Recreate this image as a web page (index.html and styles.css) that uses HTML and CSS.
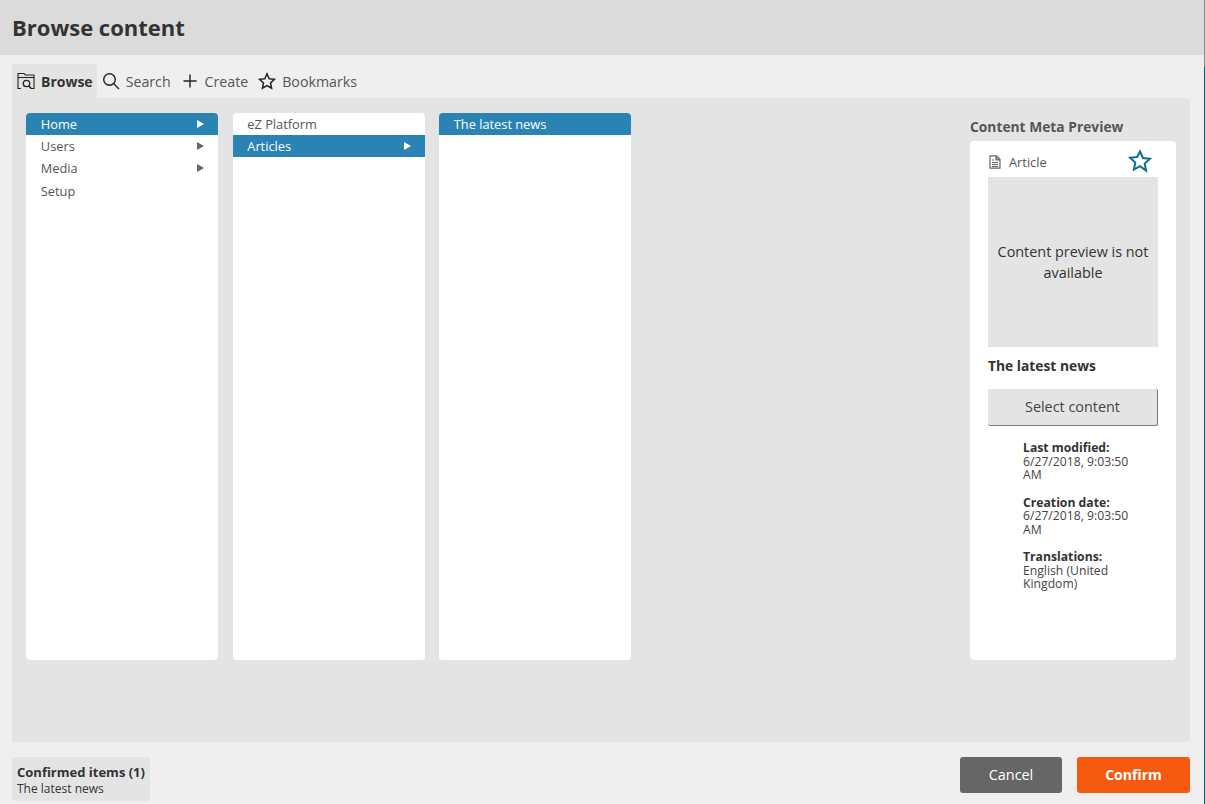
FILE: index.html
```html
<!DOCTYPE html>
<html lang="en">
<head>
<meta charset="utf-8">
<title>Browse content</title>
<link rel="stylesheet" href="styles.css">
</head>
<body>
<div class="modal">
  <header class="title-bar"><h1 class="title">Browse content</h1></header>
  <nav class="tabs">
    <div class="tab tab-active">
      <svg class="tab-icon" viewBox="0 0 18 18" width="18" height="18" fill="none" stroke="#222" stroke-width="1.100"><path d="M4 16.500H1V1.500h6l1.500 1.500h8.500v13.500h-3"/><path d="M1 5.500h16"/><circle cx="9.500" cy="11.500" r="3.200" stroke-width="1.300"/><path d="M11.800 13.800l2.200 2.700" stroke-width="1.600"/></svg>
      <span>Browse</span>
    </div>
    <div class="tab">
      <svg class="tab-icon" viewBox="0 0 18 18" width="18" height="18" fill="none" stroke="#222" stroke-width="1.400"><circle cx="7.500" cy="7.500" r="5.800"/><path d="M11.800 11.800l5.200 5.200"/></svg>
      <span>Search</span>
    </div>
    <div class="tab">
      <svg class="tab-icon" viewBox="0 0 18 18" width="18" height="18" fill="none" stroke="#222" stroke-width="1.400"><path d="M9 2.500v13M2.500 9h13"/></svg>
      <span>Create</span>
    </div>
    <div class="tab">
      <svg class="tab-icon" viewBox="0 0 18 18" width="18" height="18" fill="none" stroke="#222" stroke-width="1.500"><path d="M9 1.800l2.200 4.900 5.300.6-4 3.600 1.100 5.300L9 13.500l-4.600 2.700 1.100-5.300-4-3.600 5.300-.6z"/></svg>
      <span>Bookmarks</span>
    </div>
  </nav>
  <main class="panel">
    <div class="columns">
      <ul class="column">
        <li class="item item-selected item-arrow">Home</li>
        <li class="item item-arrow">Users</li>
        <li class="item item-arrow">Media</li>
        <li class="item">Setup</li>
      </ul>
      <ul class="column">
        <li class="item">eZ Platform</li>
        <li class="item item-selected item-arrow">Articles</li>
      </ul>
      <ul class="column">
        <li class="item item-selected">The latest news</li>
      </ul>
    </div>
    <aside class="preview">
      <h2 class="preview-heading">Content Meta Preview</h2>
      <div class="preview-card">
        <div class="preview-type">
          <svg class="type-icon" viewBox="0 0 12 14" width="12" height="14" fill="none" stroke="#666" stroke-width="1.200"><path d="M1 .8h6.500l3.500 3.500v8.900H1z"/><path d="M7 .8v4h4" fill="#999"/><path d="M3 5h2M3 7.500h6M3 9.500h6M3 11.500h6"/></svg>
          <span class="type-name">Article</span>
          <svg class="star" viewBox="0 0 24 24" width="24" height="24" fill="none" stroke="#0e6f95" stroke-width="2"><path d="M12 2.500l2.900 6.500 7 .8-5.200 4.800 1.400 7L12 17.100l-6.100 3.500 1.400-7-5.200-4.800 7-.8z"/></svg>
        </div>
        <div class="no-preview">Content preview is not available</div>
        <h3 class="content-name">The latest news</h3>
        <button class="select-btn" type="button">Select content</button>
        <dl class="meta">
          <dt>Last modified:</dt><dd>6/27/2018, 9:03:50 AM</dd>
          <dt>Creation date:</dt><dd>6/27/2018, 9:03:50 AM</dd>
          <dt>Translations:</dt><dd>English (United Kingdom)</dd>
        </dl>
      </div>
    </aside>
  </main>
  <footer class="footer">
    <div class="confirmed">
      <div class="confirmed-title">Confirmed items (1)</div>
      <div class="confirmed-item">The latest news</div>
    </div>
    <div class="actions">
      <button class="btn btn-cancel" type="button">Cancel</button>
      <button class="btn btn-confirm" type="button">Confirm</button>
    </div>
  </footer>
</div>
</body>
</html>
```
FILE: styles.css
```css
* { box-sizing: border-box; }
html, body { margin: 0; height: 100%; }
body {
  font-family: "Open Sans", "Noto Sans", sans-serif;
  font-size: 13px;
  color: #333;
  overflow: hidden;
  background: linear-gradient(#8a8a8a 0 67px, #0b5a70 67px);
}
.modal {
  width: 1204px;
  height: 804px;
  background: #efefef;
  display: flex;
  flex-direction: column;
}
.title-bar {
  height: 55px;
  flex: none;
  background: #dbdbdb;
  padding: 0 12px 2px;
  display: flex;
  align-items: center;
}
.title { margin: 0; font-size: 22px; font-weight: 700; color: #333; line-height: 30px; }
.tabs {
  flex: none;
  margin-top: 9px;
  height: 34px;
  padding-left: 12px;
  display: flex;
  color: #555;
  font-size: 14.200px;
}
.tab {
  display: flex;
  align-items: center;
  gap: 6px;
  padding: 0 5px;
  border-radius: 3px 3px 0 0;
}
.tab-icon { flex: none; }
.tab-active { background: #e4e4e4; font-weight: 700; font-size: 14px; color: #333; padding-right: 4px; }
.panel {
  flex: none;
  width: 1178px;
  height: 644px;
  margin-left: 12px;
  background: #e4e4e4;
  border-radius: 0 3px 3px 3px;
  padding: 15px 14px 82px;
  display: flex;
  justify-content: space-between;
}
.columns { display: flex; gap: 14.500px; }
.column {
  width: 192px;
  margin: 0;
  padding: 0;
  list-style: none;
  background: #fff;
  border-radius: 4px;
  overflow: hidden;
}
.item {
  position: relative;
  height: 22.200px;
  line-height: 22.400px;
  padding-left: 14.800px;
  font-size: 12.800px;
  color: #555;
}
.item-arrow::after {
  content: "";
  position: absolute;
  right: 14px;
  top: 7px;
  border-left: 7px solid #666;
  border-top: 4px solid transparent;
  border-bottom: 4px solid transparent;
}
.item-selected { background: #2b83b3; color: #fff; }
.item-selected.item-arrow::after { border-left-color: #fff; }
.preview { width: 206px; display: flex; flex-direction: column; }
.preview-heading {
  margin: 5px 0 5px;
  height: 18px;
  font-size: 13.800px;
  line-height: 18px;
  font-weight: 700;
  color: #555;
}
.preview-card {
  flex: 1;
  background: #fff;
  border-radius: 4px;
  padding: 0 18px;
}
.preview-type { height: 36px; display: flex; align-items: center; padding-top: 6px; }
.type-icon { margin-left: 1px; margin-right: 8px; flex: none; }
.type-name { color: #555; line-height: 16px; font-size: 12.800px; }
.star { margin-left: auto; margin-right: 6px; margin-top: -3px; flex: none; }
.no-preview {
  height: 170px;
  background: #e4e4e4;
  display: flex;
  align-items: center;
  text-align: center;
  font-size: 14.400px;
  line-height: 21px;
  color: #333;
  padding: 0 5px;
}
.content-name {
  margin: 9px 0 13px;
  font-size: 13.800px;
  line-height: 20px;
  font-weight: 700;
  color: #333;
}
.select-btn {
  display: block;
  width: 170px;
  height: 37px;
  padding: 0 0 2px;
  border: 0;
  border-right: 1px solid #777;
  border-bottom: 1px solid #777;
  border-radius: 2px;
  background: #e4e4e4;
  font: 14.400px "Open Sans", "Noto Sans", sans-serif;
  color: #444;
}
.meta { margin: 15px 0 0; padding: 0 10px 0 35px; font-size: 12.200px; line-height: 13.500px; color: #444; }
.meta dt { font-weight: 700; color: #333; }
.meta dd { margin: 0 0 14px; }
.footer {
  flex: 1;
  padding: 15px 14px 11px 12px;
  display: flex;
  justify-content: space-between;
  align-items: stretch;
}
.confirmed {
  background: #e4e4e4;
  border-radius: 3px;
  padding: 6px 4px 0 5px;
  width: 138px;
  height: 44px;
}
.confirmed-title { font-weight: 700; line-height: 18px; color: #333; white-space: nowrap; }
.confirmed-item { font-size: 12px; line-height: 16px; color: #333; }
.actions { display: flex; gap: 15px; height: 36px; }
.btn {
  border: 0;
  border-radius: 3px;
  height: 36px;
  font: 14.400px "Open Sans", "Noto Sans", sans-serif;
  padding: 0 0 1px;
}
.btn-cancel { width: 102px; background: #666; color: #fff; }
.btn-confirm { width: 113px; background: #f65a10; color: #fff; font-weight: 700; font-size: 14px; }
```
